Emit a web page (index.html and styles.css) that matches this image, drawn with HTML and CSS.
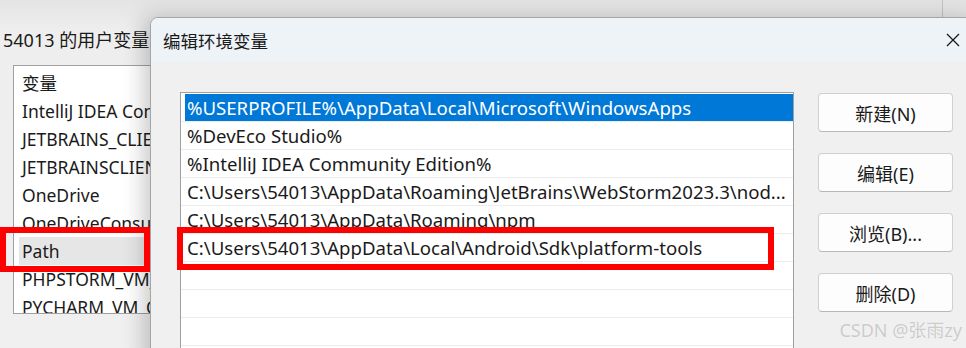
FILE: index.html
```html
<!DOCTYPE html>
<html lang="zh-CN">
  <head>
    <meta charset="UTF-8" />
    <meta name="viewport" content="width=device-width, initial-scale=1.0" />
    <title>编辑环境变量</title>
    <link rel="stylesheet" href="styles.css">
  </head>
  <body>
    <div class="screen">
      <div class="bg-window">
        <div class="bg-title">54013 的用户变量</div>
        <div class="var-list">
          <div class="var-row">变量</div>
          <div class="var-row">IntelliJ IDEA Community Edition</div>
          <div class="var-row">JETBRAINS_CLIENT_VM_OPTIONS</div>
          <div class="var-row">JETBRAINSCLIENT_VM_OPTIONS</div>
          <div class="var-row">OneDrive</div>
          <div class="var-row">OneDriveConsumer</div>
          <div class="var-row hover">Path</div>
          <div class="var-row">PHPSTORM_VM_OPTIONS</div>
          <div class="var-row">PYCHARM_VM_OPTIONS</div>
        </div>
      </div>
      <div class="bg-edge"></div>

      <div class="dialog">
        <div class="dialog-title">
          <span class="dialog-name">编辑环境变量</span>
          <svg class="close" width="14" height="14" viewBox="0 0 14 14">
            <path d="M1 1 L13 13 M13 1 L1 13" stroke="#1a1a1a" stroke-width="1.3" fill="none" />
          </svg>
        </div>
        <div class="dialog-body">
          <div class="path-list">
            <div class="path-row selected"><span class="cell">%USERPROFILE%\AppData\Local\Microsoft\WindowsApps</span></div>
            <div class="path-row"><span class="cell">%DevEco Studio%</span></div>
            <div class="path-row"><span class="cell">%IntelliJ IDEA Community Edition%</span></div>
            <div class="path-row"><span class="cell">C:\Users\54013\AppData\Roaming\JetBrains\WebStorm2023.3\nod...</span></div>
            <div class="path-row"><span class="cell">C:\Users\54013\AppData\Roaming\npm</span></div>
            <div class="path-row"><span class="cell">C:\Users\54013\AppData\Local\Android\Sdk\platform-tools</span></div>
            <div class="path-row"><span class="cell"></span></div>
            <div class="path-row"><span class="cell"></span></div>
            <div class="path-row"><span class="cell"></span></div>
          </div>
          <div class="actions">
            <button>新建(N)</button>
            <button>编辑(E)</button>
            <button>浏览(B)...</button>
            <button>删除(D)</button>
          </div>
        </div>
      </div>

      <div class="mark mark-left"></div>
      <div class="mark mark-right"></div>
      <div class="watermark">CSDN @张雨zy</div>
    </div>
  </body>
</html>
```
FILE: styles.css
```css
body {
  margin: 0;
  font-family: "Noto Sans", "Noto Sans CJK SC", sans-serif;
  color: #1a1a1a;
  background-color: #ececec;
}

.screen {
  position: relative;
  width: 966px;
  height: 348px;
  overflow: hidden;
  background: linear-gradient(#e4e4e4, #eeeeee 30px, #f0f0f0);
}

/* window behind the dialog */
.bg-window {
  padding: 28px 0 0 3px;
}

.bg-title {
  font-size: 18px;
  line-height: 24px;
  white-space: nowrap;
}

.var-list {
  margin: 13px 0 0 10px;
  width: 136px; /* the rest is hidden under the dialog */
  height: 244px;
  padding-top: 3px;
  border: 1px solid #a0a0a0;
  border-right: none;
  background-color: #fff;
  overflow: hidden;
}

.var-row {
  height: 28px;
  line-height: 28px;
  padding-left: 8px;
  font-size: 17.5px;
  white-space: nowrap;
}

.var-row.hover {
  margin-left: 5px;
  padding-left: 3px;
  background-color: #e6e6e6;
}

.bg-edge {
  position: absolute;
  left: 942px;
  top: 0;
  width: 1px;
  height: 17px;
  background-color: #c4c4c4;
}

/* dialog */
.dialog {
  position: absolute;
  left: 150px;
  top: 17px;
  width: 830px;
  height: 360px;
  border: 1px solid #a5a5a5;
  border-top-left-radius: 8px;
  background-color: #f0f0f0;
  box-shadow: -6px 0 22px rgba(0, 0, 0, 0.22);
  overflow: hidden;
}

.dialog-title {
  height: 44px;
  display: flex;
  align-items: center;
  padding: 0 21px 0 12px;
  background-color: #eef3f8;
  font-size: 17.5px;
  white-space: nowrap;
}

.close {
  margin-left: auto;
  flex-shrink: 0;
}

.dialog-body {
  display: flex;
  gap: 24px;
  padding: 30px 0 0 29px;
}

.path-list {
  width: 612px;
  height: 300px;
  padding-top: 1px;
  border: 1px solid #a0a0a0;
  background-color: #fff;
}

.path-row {
  display: flex;
  height: 27px;
  padding-left: 4px;
  border-bottom: 1px solid #ededed;
}

.cell {
  flex: 1;
  padding-left: 2px;
  line-height: 27px;
  font-size: 18.6px;
  white-space: nowrap;
  overflow: hidden;
}

.selected .cell {
  background-color: #0078d7;
  color: #fff;
}

.actions {
  display: flex;
  flex-direction: column;
  gap: 21px;
  margin-top: 1px;
}

button {
  width: 135px;
  height: 39px;
  border: 1px solid #d0d0d0;
  border-bottom-color: #b8b8b8;
  border-radius: 4px;
  background-color: #fdfdfd;
  font-family: "Noto Sans", "Noto Sans CJK SC", sans-serif;
  font-size: 18px;
  color: #1a1a1a;
}

/* red annotation boxes */
.mark {
  position: absolute;
  border: 6px solid #ff0000;
  box-sizing: border-box;
}

.mark-left {
  left: 0;
  top: 227px;
  width: 150px;
  height: 45px;
}

.mark-right {
  left: 177px;
  top: 227px;
  width: 597px;
  height: 43px;
}

.watermark {
  position: absolute;
  right: 4px;
  bottom: 6px;
  font-size: 18px;
  color: #cbcbcb;
  text-shadow: 0 0 1px #ffffff;
  white-space: nowrap;
}
```
